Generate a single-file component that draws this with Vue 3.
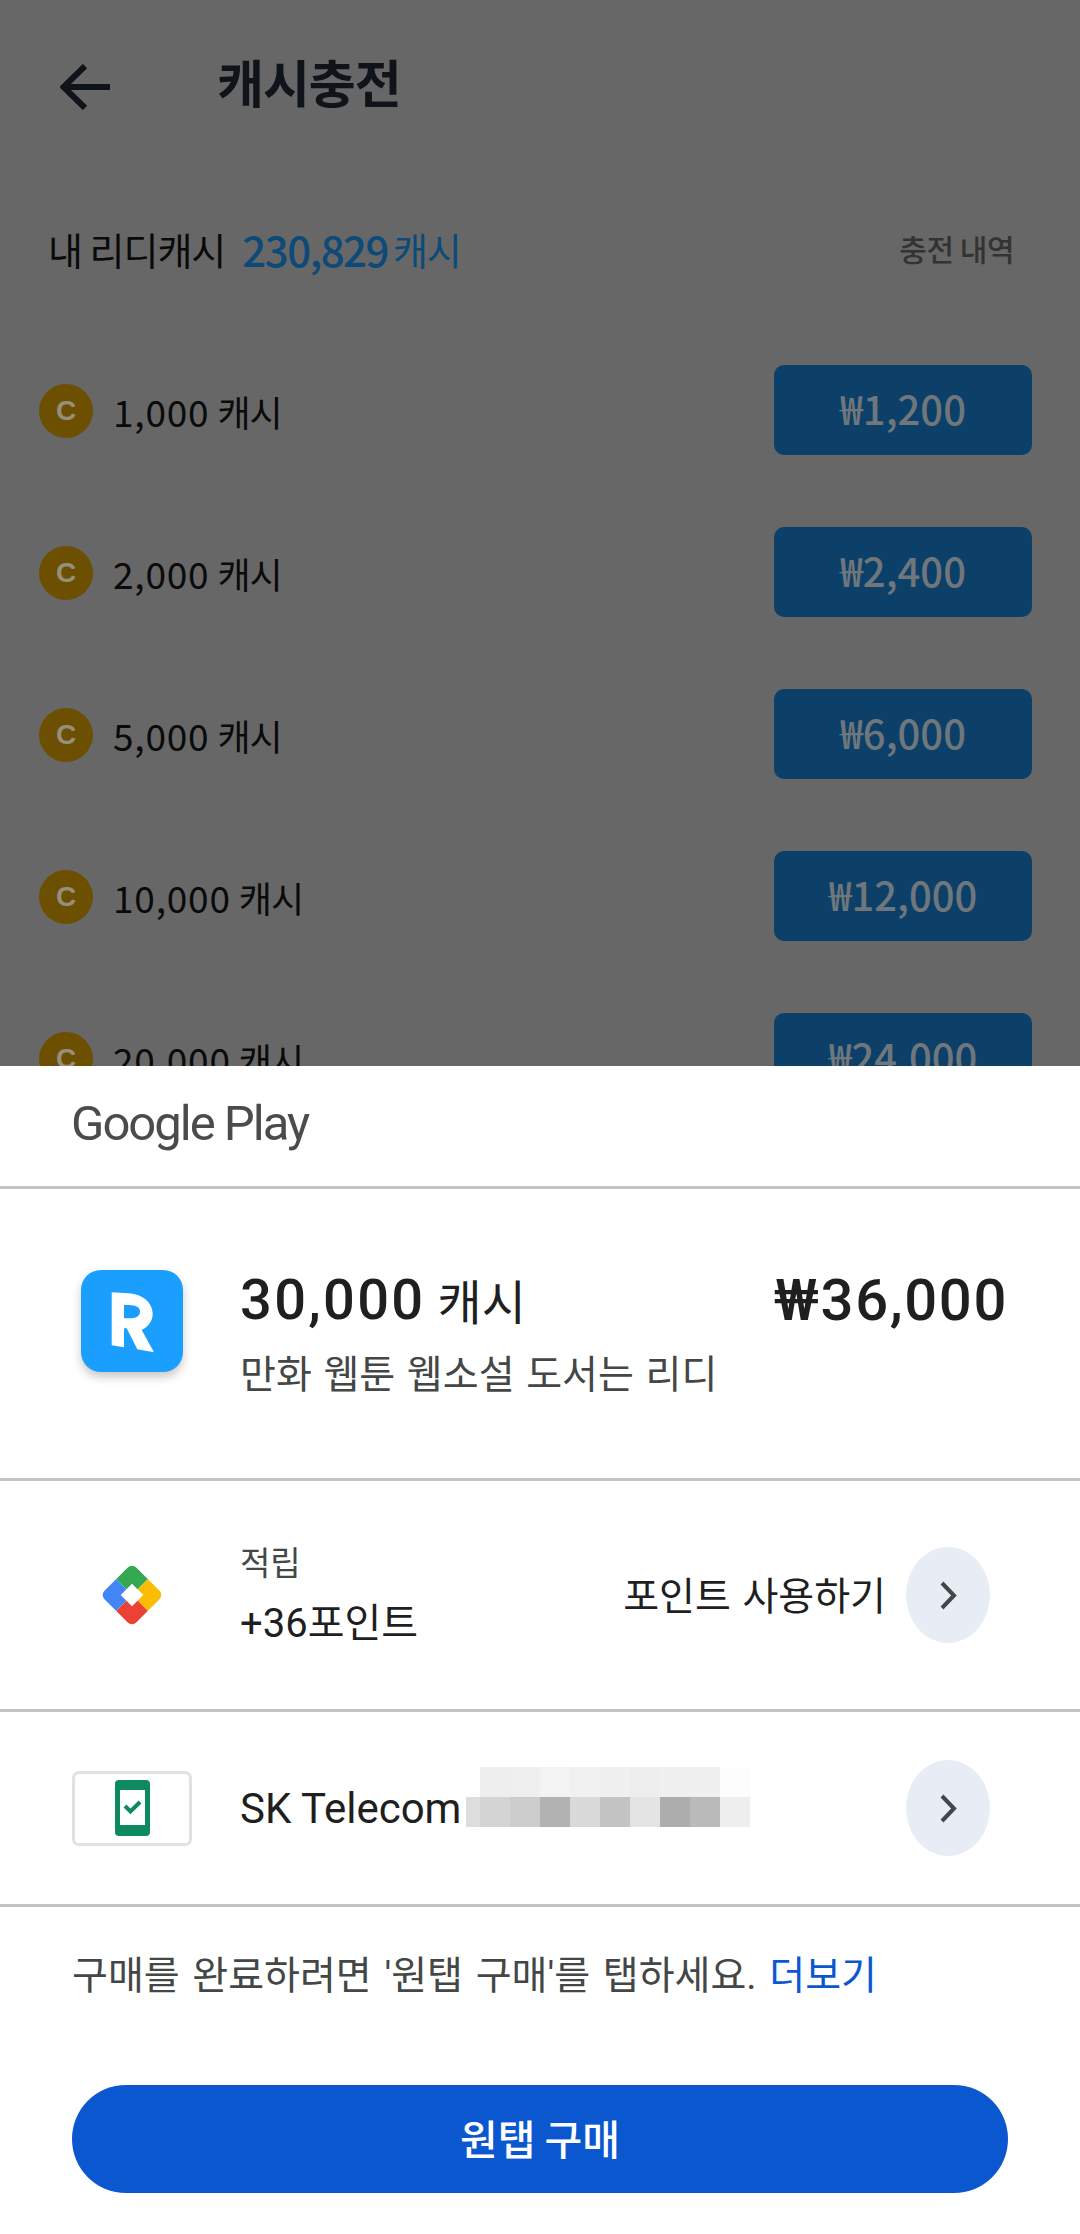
<script setup>
const packs = [
  { cash: '1,000', price: '₩1,200' },
  { cash: '2,000', price: '₩2,400' },
  { cash: '5,000', price: '₩6,000' },
  { cash: '10,000', price: '₩12,000' },
  { cash: '20,000', price: '₩24,000' },
]
const mosaic = ['#fff','#eeeeee','#efefef','#f3f3f3','#f1f1f1','#f0f0f0','#eeeeee','#f0f0f0','#f0f0f0','#fdfdfd',
  '#dddddd','#d4d4d4','#cdcdcd','#b2b2b2','#d9d9d9','#c4c4c4','#e4e4e4','#adadad','#bababa','#eeeeee']
</script>

<template>
  <div class="page">
    <header class="bar">
      <svg class="back" width="50" height="46" viewBox="0 0 50 46">
        <path d="M50 23H4M25 2 3.5 23 25 44" fill="none" stroke="#0f131a" stroke-width="6" />
      </svg>
      <h1 class="title">캐시충전</h1>
    </header>
    <div class="balance">
      <span class="bal-label">내 리디캐시</span>
      <span class="bal-num">230,829</span>
      <span class="bal-unit">캐시</span>
      <span class="history">충전 내역</span>
    </div>
    <div v-for="p in packs" :key="p.cash" class="pack">
      <span class="coin">C</span>
      <span class="pack-num">{{ p.cash }}</span>
      <span class="pack-unit">캐시</span>
      <button class="buy">{{ p.price }}</button>
    </div>

    <section class="sheet">
      <div class="gp"><span class="gp-logo">Google Play</span></div>

      <div class="item">
        <div class="slot">
          <div class="app">
            <svg width="102" height="102" viewBox="0 0 102 102">
              <path fill="#fff" fill-rule="evenodd" d="M30.7 22.3 47.3 23.3C62 24 71.7 33 71.7 44 71.7 51 67 57 60.7 60L73 82.3 56.3 79.3 45.7 58.3H43V77.3L30.7 75.3ZM43 35V48.3H48C55 48.3 59 46 59 41.7 59 37 55 35.3 48 35Z" />
            </svg>
          </div>
        </div>
        <div class="item-text">
          <div class="item-top">
            <span class="item-name"><span class="big-num">30,000</span><span class="big-unit">캐시</span></span>
            <span class="item-price">₩36,000</span>
          </div>
          <div class="item-sub">만화 웹툰 웹소설 도서는 리디</div>
        </div>
      </div>

      <div class="row points">
        <div class="slot">
          <svg width="60" height="60" viewBox="0 0 60 60">
            <defs><clipPath id="dia"><rect x="7.5" y="7.5" width="45" height="45" rx="6" /></clipPath></defs>
            <g transform="rotate(45 30 30)" clip-path="url(#dia)">
              <rect x="7" y="7" width="23" height="23" fill="#34a853" />
              <rect x="30" y="7" width="23" height="23" fill="#fbbc04" />
              <rect x="30" y="30" width="23" height="23" fill="#ea4335" />
              <rect x="7" y="30" width="23" height="23" fill="#4285f4" />
              <rect x="22" y="22" width="16" height="16" fill="#fff" />
            </g>
          </svg>
        </div>
        <div class="pts-text">
          <div class="pts-small">적립</div>
          <div class="pts-big">+36포인트</div>
        </div>
        <span class="pts-use">포인트 사용하기</span>
        <span class="more">
          <svg width="19" height="29" viewBox="0 0 19 29"><path d="M3 2 15 14.5 3 27" fill="none" stroke="#444746" stroke-width="4" /></svg>
        </span>
      </div>

      <div class="row carrier">
        <div class="slot">
          <div class="card">
            <svg width="35" height="56" viewBox="0 0 35 56">
              <rect width="35" height="56" rx="4" fill="#0f8a5f" />
              <rect x="5" y="10" width="25" height="35" fill="#fff" />
              <path d="M10 26 15.5 31.5 25 22" fill="none" stroke="#0f8a5f" stroke-width="4" />
            </svg>
          </div>
        </div>
        <span class="sk">SK Telecom</span>
        <div class="mosaic">
          <i v-for="(c, i) in mosaic" :key="i" :style="{ background: c }"></i>
        </div>
        <span class="more">
          <svg width="19" height="29" viewBox="0 0 19 29"><path d="M3 2 15 14.5 3 27" fill="none" stroke="#444746" stroke-width="4" /></svg>
        </span>
      </div>

      <div class="foot">
        <p class="note">구매를 완료하려면 '원탭 구매'를 탭하세요. <a class="link">더보기</a></p>
        <button class="pay">원탭 구매</button>
      </div>
    </section>
  </div>
</template>

<style scoped>
.page {
  position: relative;
  width: 1080px;
  height: 2234px;
  overflow: hidden;
  background: #676767;
  font-family: "Noto Sans CJK KR", sans-serif;
}
.bar {
  display: flex;
  align-items: center;
  height: 174px;
  padding-left: 60px;
}
.back { margin-right: 107px; flex: none; }
.title {
  margin: -12px 0 0;
  font-size: 51px;
  font-weight: 700;
  letter-spacing: -1px;
  color: #0f131a;
}
.balance {
  display: flex;
  align-items: center;
  height: 148px;
  padding: 0 66px 0 48px;
  margin-bottom: 8px;
}
.bal-label { font-size: 38px; color: #0a0a0a; letter-spacing: -1px; }
.bal-num { margin-left: 17px; font-size: 42px; font-weight: 500; color: #0d4a78; letter-spacing: -1.5px; }
.bal-unit { margin-left: 5px; font-size: 38px; color: #0d4a78; letter-spacing: -1.2px; }
.history { margin-left: auto; font-size: 30px; font-weight: 500; color: #333; letter-spacing: -.5px; }
.pack {
  display: flex;
  align-items: center;
  height: 162px;
  padding: 0 48px 0 39px;
  color: #0a0a0a;
}
.coin {
  display: flex;
  align-items: center;
  justify-content: center;
  width: 54px;
  height: 54px;
  border-radius: 50%;
  background: #6c4f00;
  color: #968f7c;
  font: 700 28px "Liberation Sans", sans-serif;
}
.pack-num { margin-left: 20px; font-size: 37px; font-weight: 400; letter-spacing: .8px; }
.pack-unit { margin-left: 8px; font-size: 36px; font-weight: 400; letter-spacing: -1px; }
.buy {
  margin-left: auto;
  width: 258px;
  height: 90px;
  margin-top: -2px;
  padding: 0 0 4px;
  border: 0;
  border-radius: 10px;
  background: #0c4068;
  color: #6f767c;
  font-family: "Noto Sans CJK KR", sans-serif;
  font-size: 40px;
  font-weight: 500;
}
.sheet {
  position: absolute;
  left: 0;
  right: 0;
  top: 1066px;
  bottom: 0;
  background: #fff;
  font-family: Roboto, "Noto Sans CJK KR", sans-serif;
  color: #1f1f1f;
}
.gp {
  display: flex;
  align-items: center;
  height: 120px;
  padding: 0 0 6px 71px;
  box-sizing: border-box;
}
.gp-logo { font-size: 49px; letter-spacing: -2px; color: #4a4b4b; }
.item {
  display: flex;
  align-items: flex-start;
  height: 292px;
  box-sizing: border-box;
  padding: 81px 72px 0;
  border-top: 3px solid #c4c4c4;
}
.slot {
  flex: none;
  display: flex;
  justify-content: center;
  width: 120px;
  margin-right: 48px;
}
.app {
  width: 102px;
  height: 102px;
  border-radius: 20px;
  background: #1a9fff;
  box-shadow: 0 5px 10px rgba(0, 0, 0, .22);
}
.item-text { flex: 1; margin-top: -6px; }
.item-top { display: flex; justify-content: space-between; align-items: center; height: 72px; }
.item-name { display: flex; align-items: center; gap: 12px; }
.big-num { font-size: 56px; font-weight: 500; letter-spacing: 2.3px; }
.big-unit { font-size: 48px; font-weight: 400; font-family: "Noto Sans CJK KR", sans-serif; margin-top: -2px; }
.item-price { font-size: 58px; font-weight: 500; letter-spacing: 1.6px; }
.item-sub { margin-top: 14px; font-size: 39px; word-spacing: 2px; color: #444746; line-height: 50px; }
.row {
  position: relative;
  display: flex;
  align-items: center;
  box-sizing: border-box;
  padding: 0 90px 0 72px;
  border-top: 3px solid #c4c4c4;
}
.points { height: 231px; }
.carrier { height: 195px; }
.pts-small { font-size: 33px; color: #444746; line-height: 44px; }
.pts-big { margin-top: 13px; font-size: 40px; line-height: 50px; }
.pts-use { margin-left: auto; margin-right: 20px; padding-bottom: 5px; font-size: 39px; word-spacing: 2px; }
.more {
  flex: none;
  display: flex;
  align-items: center;
  justify-content: center;
  width: 84px;
  height: 96px;
  border-radius: 50%;
  background: #e8edf5;
}
.card {
  display: flex;
  align-items: center;
  justify-content: center;
  width: 120px;
  height: 75px;
  box-sizing: border-box;
  border: 3px solid #e1e1e1;
  border-radius: 7px;
}
.sk { font-size: 42px; }
.mosaic {
  position: absolute;
  left: 466px;
  top: 55px;
  display: grid;
  grid-template-columns: 14px repeat(9, 30px);
  grid-auto-rows: 30px;
}
.carrier .more { margin-left: auto; }
.foot {
  border-top: 3px solid #c4c4c4;
  padding: 0 72px;
}
.note {
  margin: 0;
  padding-top: 44px;
  font-size: 39px;
  line-height: 50px;
  word-spacing: 3px;
  color: #444746;
}
.link { color: #0b57d0; }
.pay {
  display: block;
  width: 936px;
  height: 108px;
  margin-top: 84px;
  padding: 0 0 4px;
  border: 0;
  border-radius: 54px;
  background: #0b57cf;
  color: #fff;
  font-family: "Noto Sans CJK KR", sans-serif;
  font-size: 41px;
  font-weight: 500;
}
</style>
